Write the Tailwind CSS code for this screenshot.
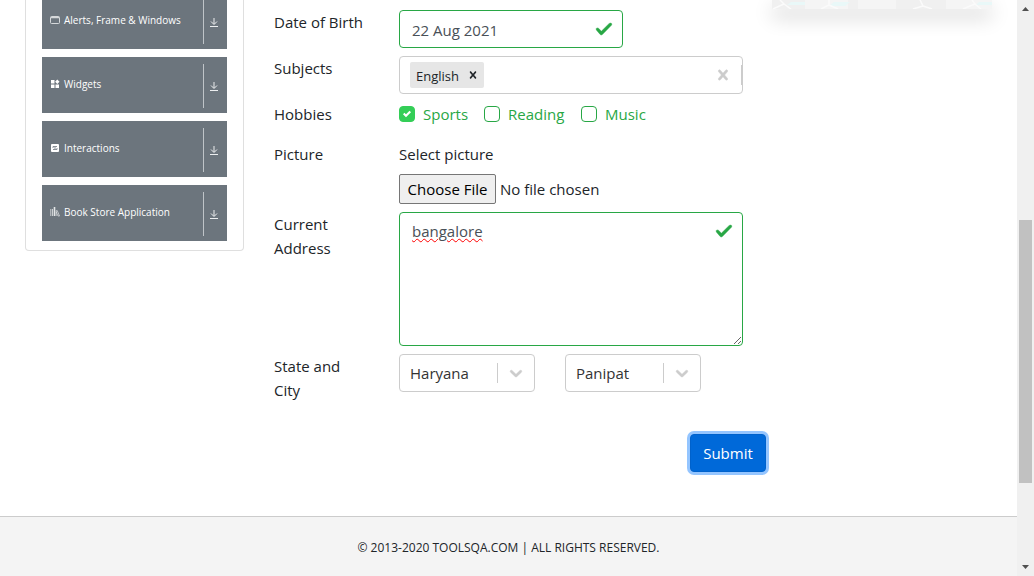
<!DOCTYPE html>
<html lang="en">
<head>
<meta charset="utf-8">
<meta name="viewport" content="width=device-width, initial-scale=1">
<title>Practice Form</title>
<script src="https://cdn.jsdelivr.net/npm/@tailwindcss/browser@4"></script>
</head>
<body class="flex h-screen overflow-hidden bg-white font-['Segoe_UI','Open_Sans',sans-serif] text-[15px] leading-6 text-[#212529]">
<div class="flex min-w-0 flex-1 flex-col overflow-hidden">
  <div class="flex items-start px-[25px]">
    <!-- Section navigation -->
    <nav class="w-[219px] shrink-0 rounded-b border border-t-0 border-[#dfdfdf] px-4 pb-[9px] text-[10px] font-medium text-white">
      <ul class="-mt-[7px] flex flex-col gap-2">
        <li><button type="button" class="flex h-14 w-full items-center bg-[#6c757d] pt-[2px] pr-2 text-left">
          <span class="flex flex-1 items-center gap-1 pb-1 pl-2">
            <svg class="size-[10px]" viewBox="0 0 10 10" fill="none" stroke="#d5d8da" aria-hidden="true"><rect x=".5" y="1.5" width="9" height="7" rx="1"/><path d="M1 2.5h8" stroke-width="1.5"/></svg>Alerts, Frame &amp; Windows</span>
          <span class="flex h-11 w-4 items-center justify-end border-l border-[#bfc4c8]"><svg class="size-[10px]" viewBox="0 0 10 10" fill="none" stroke="#eceeef" aria-hidden="true"><path d="M5 1v6M2 4.500l3 3 3-3M1 9.5h8"/></svg></span>
        </button></li>
        <li><button type="button" class="flex h-14 w-full items-center bg-[#6c757d] pt-[2px] pr-2 text-left">
          <span class="flex flex-1 items-center gap-1 pb-1 pl-2">
            <svg class="size-[10px]" viewBox="0 0 10 10" fill="#fff" aria-hidden="true"><path d="M1 1h3.5v3.5H1zM1 5.500h3.500V9H1zM5.500 5.500H9V9H5.500zM7.300.500l2.200 2.200-2.200 2.200-2.200-2.200z"/></svg>Widgets</span>
          <span class="flex h-11 w-4 items-center justify-end border-l border-[#bfc4c8]"><svg class="size-[10px]" viewBox="0 0 10 10" fill="none" stroke="#eceeef" aria-hidden="true"><path d="M5 1v6M2 4.500l3 3 3-3M1 9.5h8"/></svg></span>
        </button></li>
        <li><button type="button" class="flex h-14 w-full items-center bg-[#6c757d] pt-[2px] pr-2 text-left">
          <span class="flex flex-1 items-center gap-1 pb-1 pl-2">
            <svg class="size-[10px]" viewBox="0 0 10 10" aria-hidden="true"><rect x="1" y="1" width="8" height="8" rx="1" fill="#fff"/><path d="M3 5V3.500h4M7 5v1.500H3M4 5h2" fill="none" stroke="#6c757d" stroke-width=".8"/></svg>Interactions</span>
          <span class="flex h-11 w-4 items-center justify-end border-l border-[#bfc4c8]"><svg class="size-[10px]" viewBox="0 0 10 10" fill="none" stroke="#eceeef" aria-hidden="true"><path d="M5 1v6M2 4.500l3 3 3-3M1 9.5h8"/></svg></span>
        </button></li>
        <li><button type="button" class="flex h-14 w-full items-center bg-[#6c757d] pt-[2px] pr-2 text-left">
          <span class="flex flex-1 items-center gap-1 pb-1 pl-2">
            <svg class="size-[10px]" viewBox="0 0 10 10" fill="none" stroke="#e4e6e8" aria-hidden="true"><path d="M.8 2v7M2.500 2v7" stroke-width=".8"/><path d="M4.500 0v9" stroke-width="1.600"/><path d="M6.200 3.500v5.500M6.200 4l1-.5L9.500 9H8L6.300 5" stroke-width=".7"/></svg>Book Store Application</span>
          <span class="flex h-11 w-4 items-center justify-end border-l border-[#bfc4c8]"><svg class="size-[10px]" viewBox="0 0 10 10" fill="none" stroke="#eceeef" aria-hidden="true"><path d="M5 1v6M2 4.500l3 3 3-3M1 9.5h8"/></svg></span>
        </button></li>
      </ul>
    </nav>

    <!-- Registration form -->
    <form class="ml-[30px] min-w-0 flex-1 pt-[10px] pr-[6px]">
      <div class="mr-[23px] grid grid-cols-[95px_1fr] gap-x-[30px] gap-y-2">
        <label for="dob">Date of Birth</label>
        <div class="relative w-56">
          <input id="dob" type="text" value="22 Aug 2021" class="block h-[38px] w-full rounded border border-[#28a745] pt-[2px] pr-9 pl-3 text-[#495057]">
          <svg class="absolute top-[11px] right-[10px] h-4 w-[18px]" viewBox="0 0 8 8" preserveAspectRatio="none" fill="#28a745" stroke="#28a745" stroke-width=".2" aria-hidden="true"><path d="M2.300 6.730.600 4.530c-.400-1.040.460-1.400 1.100-.800l1.100 1.400 3.400-3.800c.600-.630 1.600-.270 1.200.700l-4 4.600c-.430.500-.800.400-1.100.100z"/></svg>
        </div>

        <label for="subjects">Subjects</label>
        <div class="flex h-[38px] items-center rounded border border-[#ccc] pl-[10px]">
          <span class="flex h-[26px] items-center rounded-xs bg-[#e6e6e6] text-[13px]">
            <span class="pt-[2px] pl-[6px]">English</span>
            <button type="button" aria-label="Remove English" class="flex h-full w-[25px] items-center justify-center pl-[2px]"><svg class="size-[14px]" viewBox="0 0 20 20" fill="#212529" aria-hidden="true"><path d="M14.348 14.849c-.469.469-1.229.469-1.697 0l-2.651-3.030-2.651 3.029c-.469.469-1.229.469-1.697 0-.469-.469-.469-1.229 0-1.697l2.758-3.150-2.759-3.152c-.469-.469-.469-1.228 0-1.697s1.228-.469 1.697 0l2.652 3.031 2.651-3.031c.469-.469 1.228-.469 1.697 0s.469 1.229 0 1.697l-2.758 3.152 2.758 3.150c.469.469.469 1.229 0 1.698z"/></svg></button>
          </span>
          <input id="subjects" type="text" class="min-w-0 flex-1 px-1 outline-none">
          <button type="button" aria-label="Clear subjects" class="mr-2"><svg class="size-5" viewBox="0 0 20 20" fill="#ccc" stroke="#ccc" stroke-width=".5" aria-hidden="true"><path d="M14.348 14.849c-.469.469-1.229.469-1.697 0l-2.651-3.030-2.651 3.029c-.469.469-1.229.469-1.697 0-.469-.469-.469-1.229 0-1.697l2.758-3.150-2.759-3.152c-.469-.469-.469-1.228 0-1.697s1.228-.469 1.697 0l2.652 3.031 2.651-3.031c.469-.469 1.228-.469 1.697 0s.469 1.229 0 1.697l-2.758 3.152 2.758 3.150c.469.469.469 1.229 0 1.698z"/></svg></button>
          <span class="h-5 w-px bg-[#ccc]"></span>
        </div>

        <span id="hobbies">Hobbies</span>
        <div role="group" aria-labelledby="hobbies" class="flex h-8 items-start text-[#28a745]">
          <label class="relative flex w-[85px] items-center gap-2"><input type="checkbox" checked class="size-4 shrink-0 appearance-none rounded border border-[#28a745] checked:border-[#34ce57] checked:bg-[#34ce57]">Sports
            <svg class="pointer-events-none absolute top-2 left-1 size-2" viewBox="0 0 8 8" fill="#fff" aria-hidden="true"><path d="M6.564.750l-3.590 3.612-1.538-1.550L0 4.260l2.974 2.990L8 2.193z"/></svg></label>
          <label class="flex w-[97px] items-center gap-2"><input type="checkbox" class="size-4 shrink-0 appearance-none rounded border border-[#28a745]">Reading</label>
          <label class="flex items-center gap-2"><input type="checkbox" class="size-4 shrink-0 appearance-none rounded border border-[#28a745]">Music</label>
        </div>

        <span>Picture</span>
        <div>
          <label for="picture" class="mb-2 block">Select picture</label>
          <input id="picture" type="file" class="block h-[30px] w-full file:mr-1 file:h-[30px] file:w-[97px] file:rounded-xs file:border file:border-solid file:border-[#767676] file:bg-[#efefef] file:p-0 file:text-black">
        </div>

        <label for="address">Current Address</label>
        <div class="relative">
          <textarea id="address" spellcheck="false" class="block h-[134px] w-full resize rounded border border-[#28a745] px-3 py-[6px] text-[#495057] underline decoration-[#f00] decoration-wavy decoration-1 underline-offset-1">bangalore</textarea>
          <svg class="absolute top-[11px] right-[10px] h-4 w-[18px]" viewBox="0 0 8 8" preserveAspectRatio="none" fill="#28a745" stroke="#28a745" stroke-width=".2" aria-hidden="true"><path d="M2.300 6.730.600 4.530c-.400-1.040.460-1.400 1.100-.800l1.100 1.400 3.400-3.800c.600-.630 1.600-.270 1.200.700l-4 4.600c-.430.500-.800.400-1.100.100z"/></svg>
        </div>

        <label for="state">State and City</label>
        <div class="flex items-start gap-[30px]">
          <div class="relative w-[136px]">
            <select id="state" class="block h-[38px] w-full appearance-none rounded border border-[#ccc] pl-[10px] text-[#333]"><option>Haryana</option></select>
            <span class="pointer-events-none absolute top-[9px] right-[9px] flex h-5 items-center border-l border-[#ccc] pl-2"><svg class="size-5" viewBox="0 0 20 20" fill="#ccc" stroke="#ccc" stroke-width=".5" aria-hidden="true"><path d="M4.516 7.548c.436-.446 1.043-.481 1.576 0L10 11.295l3.908-3.747c.533-.481 1.141-.446 1.574 0 .436.445.408 1.197 0 1.615l-4.695 4.502c-.217.223-.502.335-.787.335s-.570-.112-.789-.335L4.516 9.163c-.408-.418-.436-1.170 0-1.615z"/></svg></span>
          </div>
          <div class="relative w-[136px]">
            <select id="city" aria-label="City" class="block h-[38px] w-full appearance-none rounded border border-[#ccc] pl-[10px] text-[#333]"><option>Panipat</option></select>
            <span class="pointer-events-none absolute top-[9px] right-[9px] flex h-5 items-center border-l border-[#ccc] pl-2"><svg class="size-5" viewBox="0 0 20 20" fill="#ccc" stroke="#ccc" stroke-width=".5" aria-hidden="true"><path d="M4.516 7.548c.436-.446 1.043-.481 1.576 0L10 11.295l3.908-3.747c.533-.481 1.141-.446 1.574 0 .436.445.408 1.197 0 1.615l-4.695 4.502c-.217.223-.502.335-.787.335s-.570-.112-.789-.335L4.516 9.163c-.408-.418-.436-1.170 0-1.615z"/></svg></span>
          </div>
        </div>
      </div>
      <div class="mt-8 mb-11 flex justify-end">
        <button type="button" class="h-[38px] w-[76px] rounded border border-[#0062cc] bg-[#0069d9] text-white shadow-[0_0_0_3px_#94c5ff]">Submit</button>
      </div>
    </form>

    <!-- Bottom edge of the side banner -->
    <aside class="w-[220px] shrink-0 shadow-[0_8px_20px_rgba(0,0,0,0.2)]">
      <svg class="block h-[9px] w-full" viewBox="0 0 220 9" aria-hidden="true"><path fill="#f0f0f0" d="M0 0h220v9H0z"/><path fill="#f5f5f5" d="M33 0h43v9H33zM86 0h38v9H86zM174 0h46v9h-46z"/><path fill="#e9f8f8" d="M19 2h14v3H15zM62 2h16l-5 4H57zM207 2h13v3h-16z"/><path stroke="#fbfbfb" stroke-width="1.500" fill="none" d="M8 0l4 4-11 5M12 4l7 5M57 0v5l-8 4M57 5l9 4M148 0l3 6-10 3M151 6l9 3M200 0l3 4-12 5M203 4l6 5"/></svg>
    </aside>
  </div>

  <footer class="flex flex-1 items-start justify-center border-t border-[#ccc] bg-[#f4f4f4] pt-[19px] text-xs leading-6 text-[#212529]">© 2013-2020 TOOLSQA.COM | ALL RIGHTS RESERVED.</footer>
</div>

<!-- Page scroll bar -->
<div class="flex w-[17px] shrink-0 flex-col items-center justify-between bg-[#f0f0f0]" aria-hidden="true">
  <svg class="h-[17px] w-[17px]" viewBox="0 0 17 17" fill="#505050"><path d="M5 11h7L8.500 7z"/></svg>
  <div class="w-full flex-1 px-[2px] pt-[203px]"><div class="h-[263px] bg-[#c1c1c1]"></div></div>
  <svg class="h-[17px] w-[17px]" viewBox="0 0 17 17" fill="#505050"><path d="M5 6h7l-3.500 4z"/></svg>
</div>
</body>
</html>
